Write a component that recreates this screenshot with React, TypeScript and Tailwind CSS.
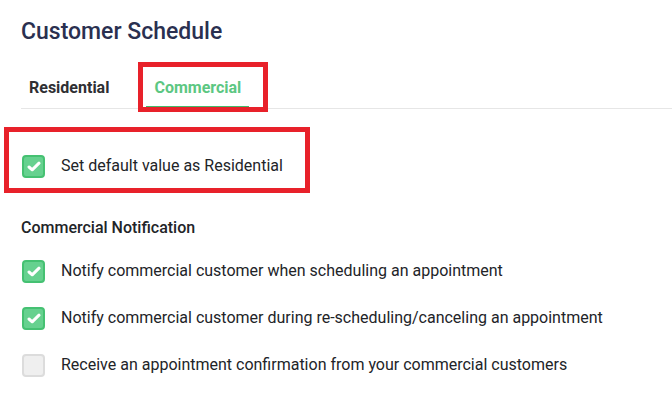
import React from "react";

function Check({ checked }: { checked: boolean }) {
  if (!checked) {
    return (
      <span className="flex h-[23px] w-[23px] shrink-0 items-center justify-center rounded-[4px] border-2 border-[#dcdcdc] bg-[#efefef]" />
    );
  }
  return (
    <span className="flex h-[23px] w-[23px] shrink-0 items-center justify-center rounded-[4px] border-2 border-[#45c172] bg-[#66d18f]">
      <svg width="14" height="11" viewBox="0 0 14 11" fill="none">
        <path d="M2 6 L5.2 8.8 L12 2.2" stroke="#ffffff" strokeWidth="3" strokeLinecap="round" strokeLinejoin="round" />
      </svg>
    </span>
  );
}

function Row({ checked, label }: { checked: boolean; label: string }) {
  return (
    <div className="flex items-center gap-[16px]">
      <Check checked={checked} />
      <span className="text-[16px] leading-[24px] text-[#222428]">{label}</span>
    </div>
  );
}

export default function App() {
  return (
    <div
      className="relative h-[416px] w-[672px] overflow-hidden bg-white"
      style={{ fontFamily: "Roboto, 'Noto Sans', sans-serif" }}
    >
      <div className="pl-[21px] pt-[18px]">
        <h1 className="text-[23px] font-medium leading-[28px] text-[#2a3050]">Customer Schedule</h1>
        <div className="mt-[30px] flex border-b border-[#e6e6e6]">
          <div className="px-[8px] pb-[8px] text-[16px] font-bold leading-[24px] text-[#2f2f33]">Residential</div>
          <div className="ml-[29px] border-b-2 border-[#45b86a] px-[8px] pb-[6px] text-[16px] font-bold leading-[24px] text-[#5cc782]">
            Commercial
          </div>
        </div>
        <div className="mt-[45px] pl-[1px]">
          <Row checked label="Set default value as Residential" />
        </div>
        <div className="mt-[39px] text-[16px] font-medium leading-[22px] text-[#222428]">Commercial Notification</div>
        <div className="mt-[20px] flex flex-col gap-[23px] pl-[1px]">
          <Row checked label="Notify commercial customer when scheduling an appointment" />
          <Row checked label="Notify commercial customer during re-scheduling/canceling an appointment" />
          <Row checked={false} label="Receive an appointment confirmation from your commercial customers" />
        </div>
      </div>
      <div className="pointer-events-none absolute left-[138px] top-[62px] h-[50px] w-[130px] border-[5px] border-[#e8212a]" />
      <div className="pointer-events-none absolute left-[4px] top-[127px] h-[66px] w-[306px] border-[5px] border-[#e8212a]" />
    </div>
  );
}
